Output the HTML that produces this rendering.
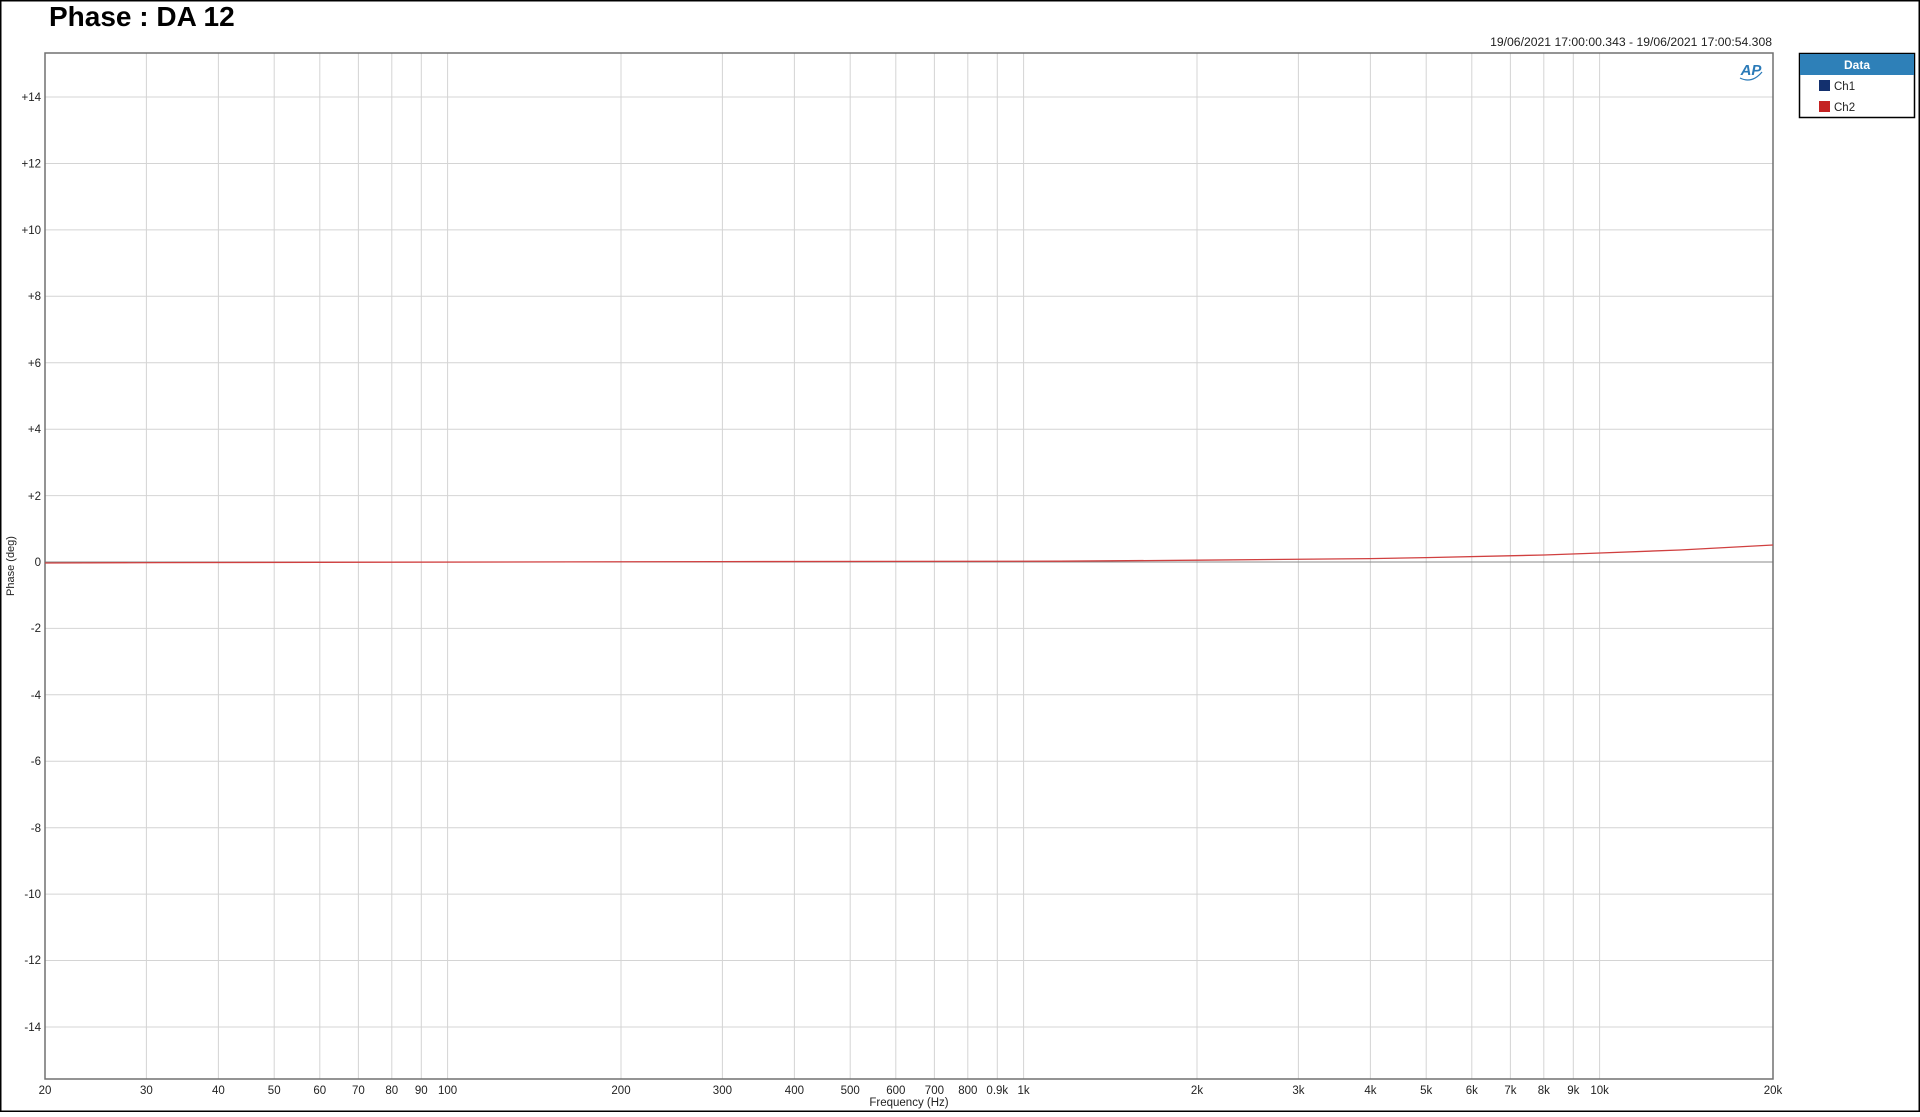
<!DOCTYPE html>
<html><head><meta charset="utf-8"><style>
html,body{margin:0;padding:0;background:#fff;}
body{width:1920px;height:1112px;overflow:hidden;font-family:"Liberation Sans",sans-serif;}
</style></head><body>
<svg width="1920" height="1112" xmlns="http://www.w3.org/2000/svg" font-family="Liberation Sans, sans-serif">
<rect x="0.5" y="0.5" width="1919" height="1111" fill="#fff" stroke="#000" stroke-width="2"/>
<text x="49" y="26" font-size="28" font-weight="bold" fill="#000">Phase : DA 12</text>
<text x="1772" y="46" font-size="12.2" text-anchor="end" fill="#222">19/06/2021 17:00:00.343 - 19/06/2021 17:00:54.308</text>
<g stroke="#d4d4d4" stroke-width="1">
<line x1="146.4" y1="53" x2="146.4" y2="1079"/><line x1="218.4" y1="53" x2="218.4" y2="1079"/><line x1="274.2" y1="53" x2="274.2" y2="1079"/><line x1="319.8" y1="53" x2="319.8" y2="1079"/><line x1="358.4" y1="53" x2="358.4" y2="1079"/><line x1="391.8" y1="53" x2="391.8" y2="1079"/><line x1="421.3" y1="53" x2="421.3" y2="1079"/><line x1="447.6" y1="53" x2="447.6" y2="1079"/>
<line x1="621" y1="53" x2="621" y2="1079"/><line x1="722.4" y1="53" x2="722.4" y2="1079"/><line x1="794.4" y1="53" x2="794.4" y2="1079"/><line x1="850.2" y1="53" x2="850.2" y2="1079"/><line x1="895.8" y1="53" x2="895.8" y2="1079"/><line x1="934.4" y1="53" x2="934.4" y2="1079"/><line x1="967.8" y1="53" x2="967.8" y2="1079"/><line x1="997.3" y1="53" x2="997.3" y2="1079"/><line x1="1023.6" y1="53" x2="1023.6" y2="1079"/>
<line x1="1197" y1="53" x2="1197" y2="1079"/><line x1="1298.4" y1="53" x2="1298.4" y2="1079"/><line x1="1370.4" y1="53" x2="1370.4" y2="1079"/><line x1="1426.2" y1="53" x2="1426.2" y2="1079"/><line x1="1471.8" y1="53" x2="1471.8" y2="1079"/><line x1="1510.4" y1="53" x2="1510.4" y2="1079"/><line x1="1543.8" y1="53" x2="1543.8" y2="1079"/><line x1="1573.3" y1="53" x2="1573.3" y2="1079"/><line x1="1599.6" y1="53" x2="1599.6" y2="1079"/>
<line x1="45" y1="97" x2="1773" y2="97"/><line x1="45" y1="163.5" x2="1773" y2="163.5"/><line x1="45" y1="229.9" x2="1773" y2="229.9"/><line x1="45" y1="296.3" x2="1773" y2="296.3"/><line x1="45" y1="362.7" x2="1773" y2="362.7"/><line x1="45" y1="429.2" x2="1773" y2="429.2"/><line x1="45" y1="495.6" x2="1773" y2="495.6"/>
<line x1="45" y1="628.4" x2="1773" y2="628.4"/><line x1="45" y1="694.8" x2="1773" y2="694.8"/><line x1="45" y1="761.3" x2="1773" y2="761.3"/><line x1="45" y1="827.7" x2="1773" y2="827.7"/><line x1="45" y1="894.1" x2="1773" y2="894.1"/><line x1="45" y1="960.5" x2="1773" y2="960.5"/><line x1="45" y1="1027" x2="1773" y2="1027"/>
</g>
<line x1="45" y1="562" x2="1773" y2="562" stroke="#888" stroke-width="1"/>
<rect x="45" y="53" width="1728" height="1026" fill="none" stroke="#707070" stroke-width="1.5"/>
<polyline fill="none" stroke="#d04040" stroke-width="1.3" points="45,563 160,562.6 720,561.6 1060,561.2 1197,560.2 1370,558.6 1426,557.6 1544,555 1600,553 1680,550 1773,545"/>
<g font-size="11.5" fill="#222" text-anchor="end">
<text x="41" y="101">+14</text><text x="41" y="167.5">+12</text><text x="41" y="234">+10</text><text x="41" y="300">+8</text><text x="41" y="367">+6</text><text x="41" y="433">+4</text><text x="41" y="500">+2</text><text x="41" y="566">0</text><text x="41" y="632">-2</text><text x="41" y="699">-4</text><text x="41" y="765">-6</text><text x="41" y="832">-8</text><text x="41" y="898">-10</text><text x="41" y="964">-12</text><text x="41" y="1031">-14</text>
</g>
<text transform="translate(14,566) rotate(-90)" font-size="11" fill="#222" text-anchor="middle">Phase (deg)</text>
<g font-size="11.5" fill="#222" text-anchor="middle">
<text x="45" y="1094">20</text><text x="146.4" y="1094">30</text><text x="218.4" y="1094">40</text><text x="274.2" y="1094">50</text><text x="319.8" y="1094">60</text><text x="358.4" y="1094">70</text><text x="391.8" y="1094">80</text><text x="421.3" y="1094">90</text><text x="447.6" y="1094">100</text>
<text x="621" y="1094">200</text><text x="722.4" y="1094">300</text><text x="794.4" y="1094">400</text><text x="850.2" y="1094">500</text><text x="895.8" y="1094">600</text><text x="934.4" y="1094">700</text><text x="967.8" y="1094">800</text><text x="997.3" y="1094">0.9k</text><text x="1023.6" y="1094">1k</text>
<text x="1197" y="1094">2k</text><text x="1298.4" y="1094">3k</text><text x="1370.4" y="1094">4k</text><text x="1426.2" y="1094">5k</text><text x="1471.8" y="1094">6k</text><text x="1510.4" y="1094">7k</text><text x="1543.8" y="1094">8k</text><text x="1573.3" y="1094">9k</text><text x="1599.6" y="1094">10k</text><text x="1773" y="1094">20k</text>
<text x="909" y="1106">Frequency (Hz)</text>
</g>
<text x="1751" y="75" font-size="15" font-weight="bold" font-style="italic" fill="#2a7ab8" text-anchor="middle">AP</text>
<path d="M1740 78 Q1752 84 1762 72" fill="none" stroke="#2a7ab8" stroke-width="1.2"/>
<rect x="1799.5" y="53.5" width="115" height="64" fill="#fff" stroke="#000" stroke-width="1.5"/>
<rect x="1800" y="54" width="114" height="21" fill="#2e80b8"/>
<text x="1857" y="69" font-size="12" font-weight="bold" fill="#fff" text-anchor="middle">Data</text>
<rect x="1819" y="80" width="11" height="11" fill="#13306e"/>
<text x="1834" y="90" font-size="11.5" fill="#222">Ch1</text>
<rect x="1819" y="101" width="11" height="11" fill="#c42222"/>
<text x="1834" y="111" font-size="11.5" fill="#222">Ch2</text>
</svg>
</body></html>
